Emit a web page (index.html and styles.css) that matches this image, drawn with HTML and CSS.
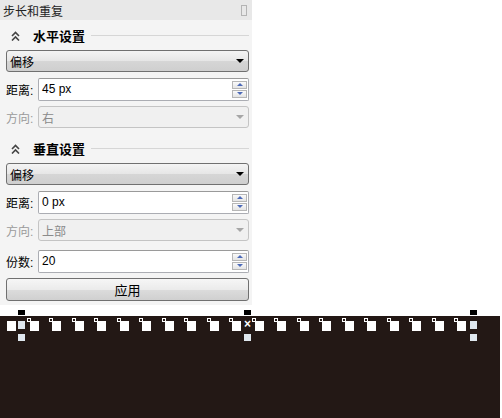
FILE: index.html
```html
<!DOCTYPE html>
<html lang="zh-CN">
<head>
    <meta charset="UTF-8">
    <title>步长和重复</title>
    <link rel="stylesheet" href="styles.css">
</head>
<body>
<div class="docker">
    <div class="docker-title">
        <span>步长和重复</span>
        <i class="pin"></i>
    </div>
    <div class="docker-body">
        <div class="group-head first">
            <svg class="fold" width="9" height="10" viewBox="0 0 9 10"><polyline points="1,5 4.5,1.5 8,5"/><polyline points="1,9.5 4.5,6 8,9.5"/></svg>
            <b>水平设置</b>
            <span class="rule"></span>
        </div>
        <div class="combo row"><span>偏移</span><i class="arrow"></i></div>
        <div class="field row">
            <label>距离:</label>
            <div class="spin-box"><span>45 px</span>
                <div class="spinner"><i class="up"></i><i class="down"></i></div>
            </div>
        </div>
        <div class="field row off">
            <label>方向:</label>
            <div class="combo"><span>右</span><i class="arrow"></i></div>
        </div>

        <div class="group-head">
            <svg class="fold" width="9" height="10" viewBox="0 0 9 10"><polyline points="1,5 4.5,1.5 8,5"/><polyline points="1,9.5 4.5,6 8,9.5"/></svg>
            <b>垂直设置</b>
            <span class="rule"></span>
        </div>
        <div class="combo row"><span>偏移</span><i class="arrow"></i></div>
        <div class="field row">
            <label>距离:</label>
            <div class="spin-box"><span>0 px</span>
                <div class="spinner"><i class="up"></i><i class="down"></i></div>
            </div>
        </div>
        <div class="field row off">
            <label>方向:</label>
            <div class="combo"><span>上部</span><i class="arrow"></i></div>
        </div>

        <div class="field row spaced">
            <label>份数:</label>
            <div class="spin-box"><span>20</span>
                <div class="spinner"><i class="up"></i><i class="down"></i></div>
            </div>
        </div>
        <div class="apply row">应用</div>
    </div>
</div>

<div class="stage">
    <div class="strip">
        <div class="cells">
            <i class="cell plain"></i>
            <i class="cell"></i><i class="cell"></i><i class="cell"></i><i class="cell"></i>
            <i class="cell"></i><i class="cell"></i><i class="cell"></i><i class="cell"></i>
            <i class="cell"></i><i class="cell"></i><i class="cell"></i><i class="cell"></i>
            <i class="cell"></i><i class="cell"></i><i class="cell"></i><i class="cell"></i>
            <i class="cell"></i><i class="cell"></i><i class="cell"></i><i class="cell"></i>
        </div>
    </div>
    <!-- selection handles -->
    <i class="handle top h-left"></i>
    <i class="handle mid h-left"></i>
    <i class="handle low h-left"></i>
    <i class="handle top h-center"></i>
    <span class="cross h-center">×</span>
    <i class="handle low h-center"></i>
    <i class="handle top h-right"></i>
    <i class="handle mid h-right"></i>
    <i class="handle low h-right"></i>
</div>
</body>
</html>
```

FILE: styles.css
```css
body {
    margin: 0;
    background: #fff;
    font-family: "Liberation Sans", "Noto Sans CJK SC", sans-serif;
    font-size: 12px;
    color: #000;
}

.docker {
    width: 252px;
    height: 305px;
    background: #f4f4f4;
}

.docker-title {
    height: 20px;
    display: flex;
    align-items: center;
    justify-content: space-between;
    padding: 0 4px 0 3px;
    background: #e8e8e8;
    color: #222;
    font-size: 12px;
}

.pin {
    width: 4px;
    height: 9px;
    border: 1px solid #b4b4b4;
    margin-right: 1px;
}

.docker-body {
    display: flex;
    flex-direction: column;
    padding: 1px 3px 0 6px;
}

.group-head {
    height: 29px;
    display: flex;
    align-items: center;
    margin-top: 6px;
}

.group-head.first {
    margin-top: 0;
}

.fold {
    margin: 0 13px 0 5px;
    fill: none;
    stroke: #444;
    stroke-width: 1.6;
}

.group-head b {
    font-size: 13px;
    font-weight: bold;
    margin-right: 6px;
}

.rule {
    flex: 1;
    height: 1px;
    background: #d6d6d6;
}

.row + .row {
    margin-top: 6px;
}

.row.spaced {
    margin-top: 9px;
}

.combo {
    height: 22px;
    box-sizing: border-box;
    display: flex;
    align-items: center;
    justify-content: space-between;
    padding: 0 4px 0 3px;
    border: 1px solid #707070;
    border-radius: 3px;
    background: linear-gradient(#f4f4f4, #e6e6e6 50%, #d6d6d6 51%, #cfcfcf);
}

.arrow {
    width: 0;
    height: 0;
    border-left: 4px solid transparent;
    border-right: 4px solid transparent;
    border-top: 4px solid #000;
}

.field {
    height: 22px;
    display: flex;
    align-items: center;
}

.field label {
    width: 32px;
}

.field .combo,
.spin-box {
    flex: 1;
}

.spin-box {
    height: 23px;
    box-sizing: border-box;
    display: flex;
    align-items: center;
    justify-content: space-between;
    padding: 0 1px 0 3px;
    border: 1px solid #abadb3;
    border-top-color: #9a9a9a;
    border-radius: 2px;
    background: #fff;
}

.spinner {
    display: flex;
    flex-direction: column;
    gap: 1px;
}

.spinner i {
    width: 15px;
    height: 8px;
    box-sizing: border-box;
    border: 1px solid #b6b6b6;
    background: linear-gradient(#fafafa, #e4e4e4);
    display: flex;
    align-items: center;
    justify-content: center;
}

.spinner i::after {
    content: "";
    border-left: 3px solid transparent;
    border-right: 3px solid transparent;
}

.spinner .up::after {
    border-bottom: 3px solid #4d6ab8;
}

.spinner .down::after {
    border-top: 3px solid #4d6ab8;
}

.off label {
    color: #9a9a9a;
}

.off .combo {
    border-color: #c4c4c4;
    background: #f0f0f0;
    color: #8a8a8a;
}

.off .arrow {
    border-top-color: #a6a6a6;
}

.apply {
    height: 23px;
    box-sizing: border-box;
    display: flex;
    align-items: center;
    justify-content: center;
    border: 1px solid #707070;
    border-radius: 3px;
    background: linear-gradient(#f6f6f6, #ebebeb 50%, #dcdcdc 51%, #d0d0d0);
    font-size: 13px;
}

/* canvas */
.stage {
    position: relative;
    height: 113px;
}

.strip {
    position: absolute;
    left: 0;
    top: 11px;
    width: 500px;
    height: 102px;
    background: #231815;
}

.cells {
    display: flex;
    gap: 13.5px;
    padding: 5px 0 0 7px;
}

.cell {
    position: relative;
    width: 9px;
    height: 10px;
    background: #fff;
}

.cell::before {
    content: "";
    position: absolute;
    left: -3px;
    top: -3px;
    width: 2px;
    height: 2px;
    border: 1px solid #fff;
    background: #231815;
}

.cell.plain::before {
    display: none;
}

.handle {
    position: absolute;
    width: 7px;
}

.handle.top {
    top: 5px;
    height: 5px;
    background: #000;
}

.handle.mid {
    top: 16px;
    height: 8px;
    background: #dfe7ee;
}

.handle.low {
    top: 29px;
    height: 7px;
    background: #dfe7ee;
}

.h-left {
    left: 18px;
}

.h-center {
    left: 244px;
}

.h-right {
    left: 470px;
}

.cross {
    position: absolute;
    top: 13px;
    width: 7px;
    color: #fff;
    font-weight: bold;
    font-size: 12px;
    line-height: 12px;
    text-align: center;
}
```
